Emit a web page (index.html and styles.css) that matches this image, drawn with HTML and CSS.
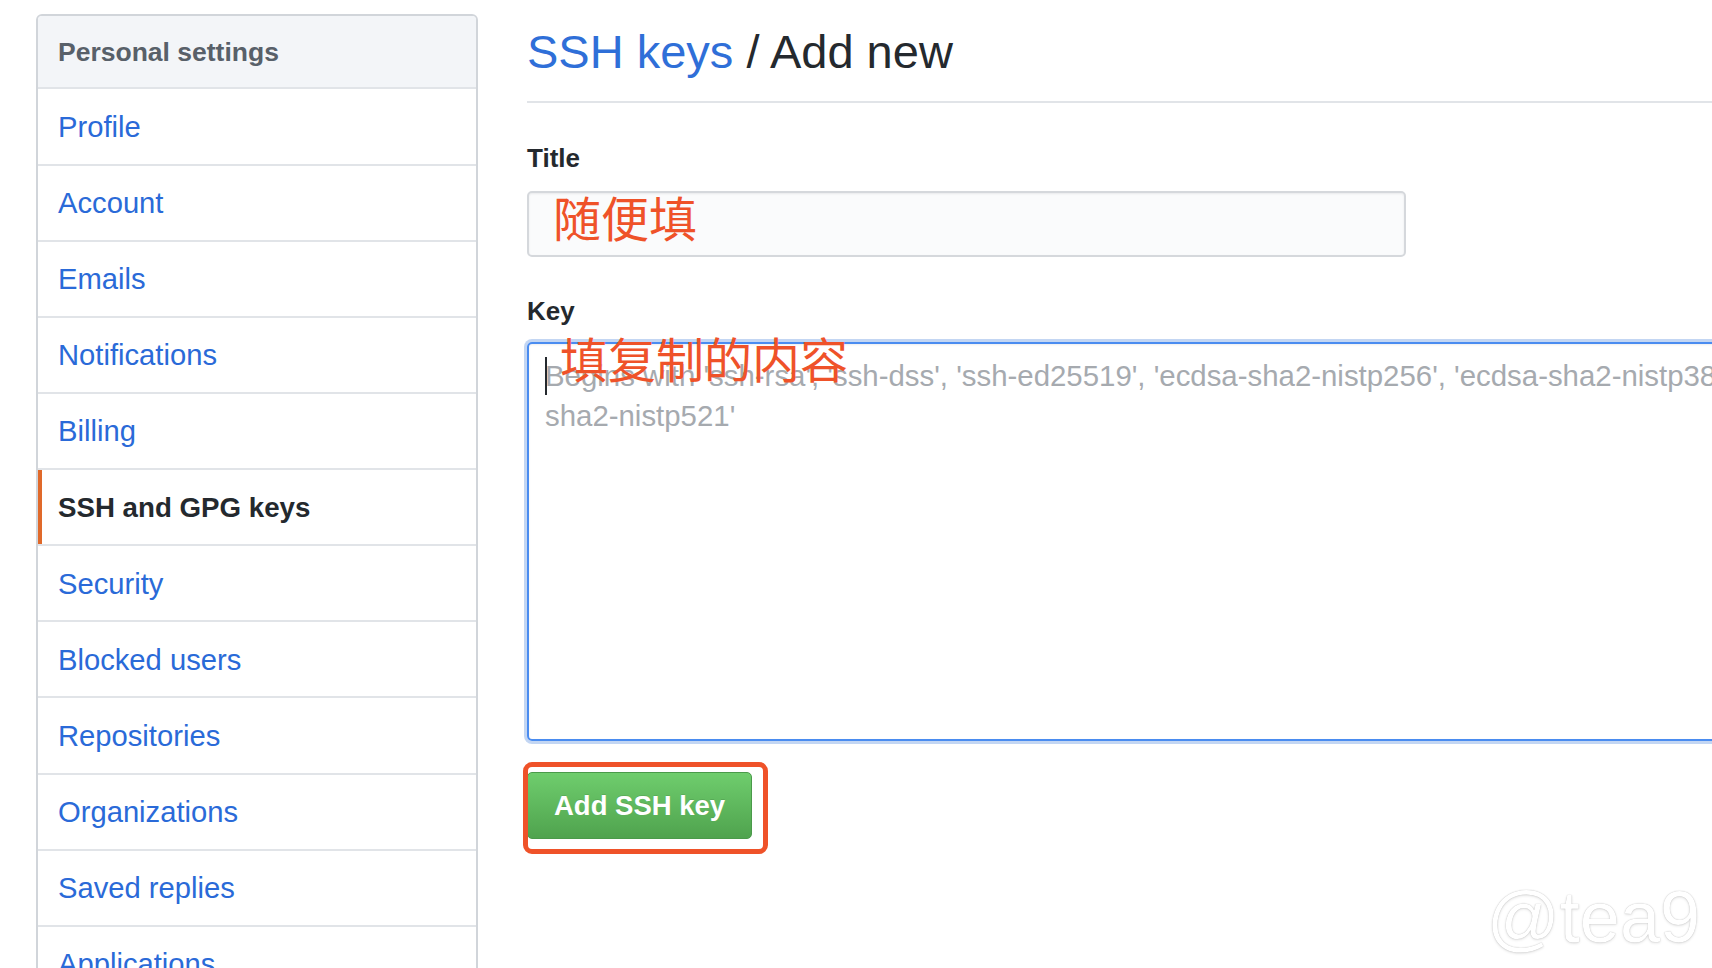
FILE: index.html
```html
<!DOCTYPE html>
<html lang="zh-CN">
<head>
<meta charset="utf-8">
<title>SSH keys / Add new</title>
<link rel="stylesheet" href="styles.css">
</head>
<body>
<div class="page">
  <nav class="sidebar">
    <div class="sidebar-head">Personal settings</div>
    <a class="nav-item" href="#">Profile</a>
    <a class="nav-item" href="#">Account</a>
    <a class="nav-item" href="#">Emails</a>
    <a class="nav-item" href="#">Notifications</a>
    <a class="nav-item" href="#">Billing</a>
    <a class="nav-item active" href="#">SSH and GPG keys</a>
    <a class="nav-item" href="#">Security</a>
    <a class="nav-item" href="#">Blocked users</a>
    <a class="nav-item" href="#">Repositories</a>
    <a class="nav-item" href="#">Organizations</a>
    <a class="nav-item" href="#">Saved replies</a>
    <a class="nav-item" href="#">Applications</a>
    <a class="nav-item" href="#">Developer settings</a>
  </nav>

  <main class="main">
    <h1 class="page-title"><a class="crumb" href="#">SSH keys</a> / Add new</h1>

    <div class="field">
      <div class="label">Title</div>
      <div class="input"><span class="note note-title">随便填</span></div>
    </div>

    <div class="field">
      <div class="label">Key</div>
      <div class="textarea">
        <span class="caret"></span>
        <div class="ph-line">Begins with 'ssh-rsa', 'ssh-dss', 'ssh-ed25519', 'ecdsa-sha2-nistp256', 'ecdsa-sha2-nistp384', or 'ecdsa-</div>
        <div class="ph-line">sha2-nistp521'</div>
        <span class="note note-key">填复制的内容</span>
      </div>
    </div>

    <div class="actions">
      <div class="btn-wrap">
        <button class="btn-primary" type="button">Add SSH key</button>
        <span class="annot-box"></span>
      </div>
    </div>
  </main>
</div>
<div class="watermark">@tea9</div>
</body>
</html>
```

FILE: styles.css
```css
html, body {
  margin: 0;
  padding: 0;
  height: 100%;
  overflow: hidden;
  background: #fff;
}

body {
  font-family: "Liberation Sans", Arial, "Noto Sans CJK SC", sans-serif;
  color: #24292e;
  position: relative;
}

.page {
  display: flex;
  align-items: flex-start;
  padding-left: 36px;
}

/* Sidebar */
.sidebar {
  flex: 0 0 auto;
  width: 442px;
  box-sizing: border-box;
  margin-top: 14px;
  border: 2px solid #d1d5da;
  border-radius: 6px;
  overflow: hidden;
  display: flex;
  flex-direction: column;
}

.sidebar-head {
  height: 71.4px;
  box-sizing: border-box;
  display: flex;
  align-items: center;
  padding: 2px 19px 0 20px;
  background: #f3f5f8;
  color: #586069;
  font-weight: bold;
  font-size: 26.5px;
}

.nav-item {
  display: flex;
  align-items: center;
  height: 74.13px;
  box-sizing: border-box;
  padding: 2px 19px 0 20px;
  border-top: 2px solid #e1e4e8;
  color: #2a6ad8;
  font-size: 29.2px;
  text-decoration: none;
}

.nav-item + .nav-item,
.sidebar-head + .nav-item {
  height: 76.13px;
}

.nav-item.active {
  color: #24292e;
  font-weight: bold;
  font-size: 27.7px;
  box-shadow: inset 4px 0 0 #e0692a;
}

/* Main */
.main {
  flex: 0 0 1300px;
  margin-left: 49px;
}

.page-title {
  margin: 23.7px 0 0;
  padding-bottom: 21.3px;
  border-bottom: 2px solid #e1e4e8;
  font-size: 47px;
  line-height: 56px;
  font-weight: normal;
  color: #24292e;
}

.crumb {
  color: #2f6fd8;
  text-decoration: none;
}

.field {
  display: flex;
  flex-direction: column;
}

.label {
  font-weight: bold;
  font-size: 26px;
  line-height: 32px;
  margin-top: 39px;
  margin-bottom: 16.7px;
}

.field + .field .label {
  margin-top: 37.8px;
  margin-bottom: 15px;
}

.input {
  width: 878.5px;
  height: 66.5px;
  box-sizing: border-box;
  border: 2px solid #d5d8dc;
  border-radius: 5px;
  background: #fafbfc;
  box-shadow: inset 0 1px 2px rgba(27, 31, 35, 0.075);
  padding-left: 24px;
}

.note {
  font-family: "Noto Sans CJK SC", sans-serif;
  color: #ef5229;
  font-size: 48px;
  line-height: 48px;
}

.note-title {
  display: block;
  margin-top: -1px;
}

.textarea {
  position: relative;
  width: 1300px;
  height: 399px;
  box-sizing: border-box;
  border: 2px solid #4a8cf0;
  border-radius: 5px;
  box-shadow: 0 0 0 3px #c3d6f3, inset 0 1px 2px rgba(27, 31, 35, 0.075);
  padding: 12px 16px;
}

.ph-line {
  white-space: nowrap;
  font-size: 29.4px;
  line-height: 40px;
  color: #a6aaaf;
}

.caret {
  position: absolute;
  left: 16px;
  top: 13px;
  width: 2px;
  height: 38px;
  background: #24292e;
}

.note-key {
  position: absolute;
  left: 31px;
  top: -11px;
  white-space: nowrap;
}

/* Button */
.actions {
  margin-top: 31px;
}

.btn-wrap {
  position: relative;
  display: inline-block;
}

.btn-primary {
  display: block;
  height: 67px;
  padding: 2px 26px 0;
  box-sizing: border-box;
  border: 1.5px solid #4a9a4a;
  border-radius: 5px;
  background: linear-gradient(#6fcd6d, #4fa34e);
  color: #fff;
  font-family: "Liberation Sans", Arial, sans-serif;
  font-weight: bold;
  font-size: 27.5px;
  text-shadow: 0 -1px 0 rgba(0, 0, 0, 0.1);
  cursor: pointer;
}

.annot-box {
  position: absolute;
  left: -4.5px;
  top: -10px;
  right: -16px;
  bottom: -15px;
  border: 5.5px solid #ef5229;
  border-radius: 9px;
}

/* Watermark */
.watermark {
  position: absolute;
  right: 12px;
  top: 881px;
  font-family: "Liberation Sans", Arial, sans-serif;
  font-size: 72px;
  line-height: 72px;
  color: #fff;
  text-shadow: 0 0 1px rgba(0, 0, 0, 0.3), 0 1px 3px rgba(0, 0, 0, 0.12);
}
```
